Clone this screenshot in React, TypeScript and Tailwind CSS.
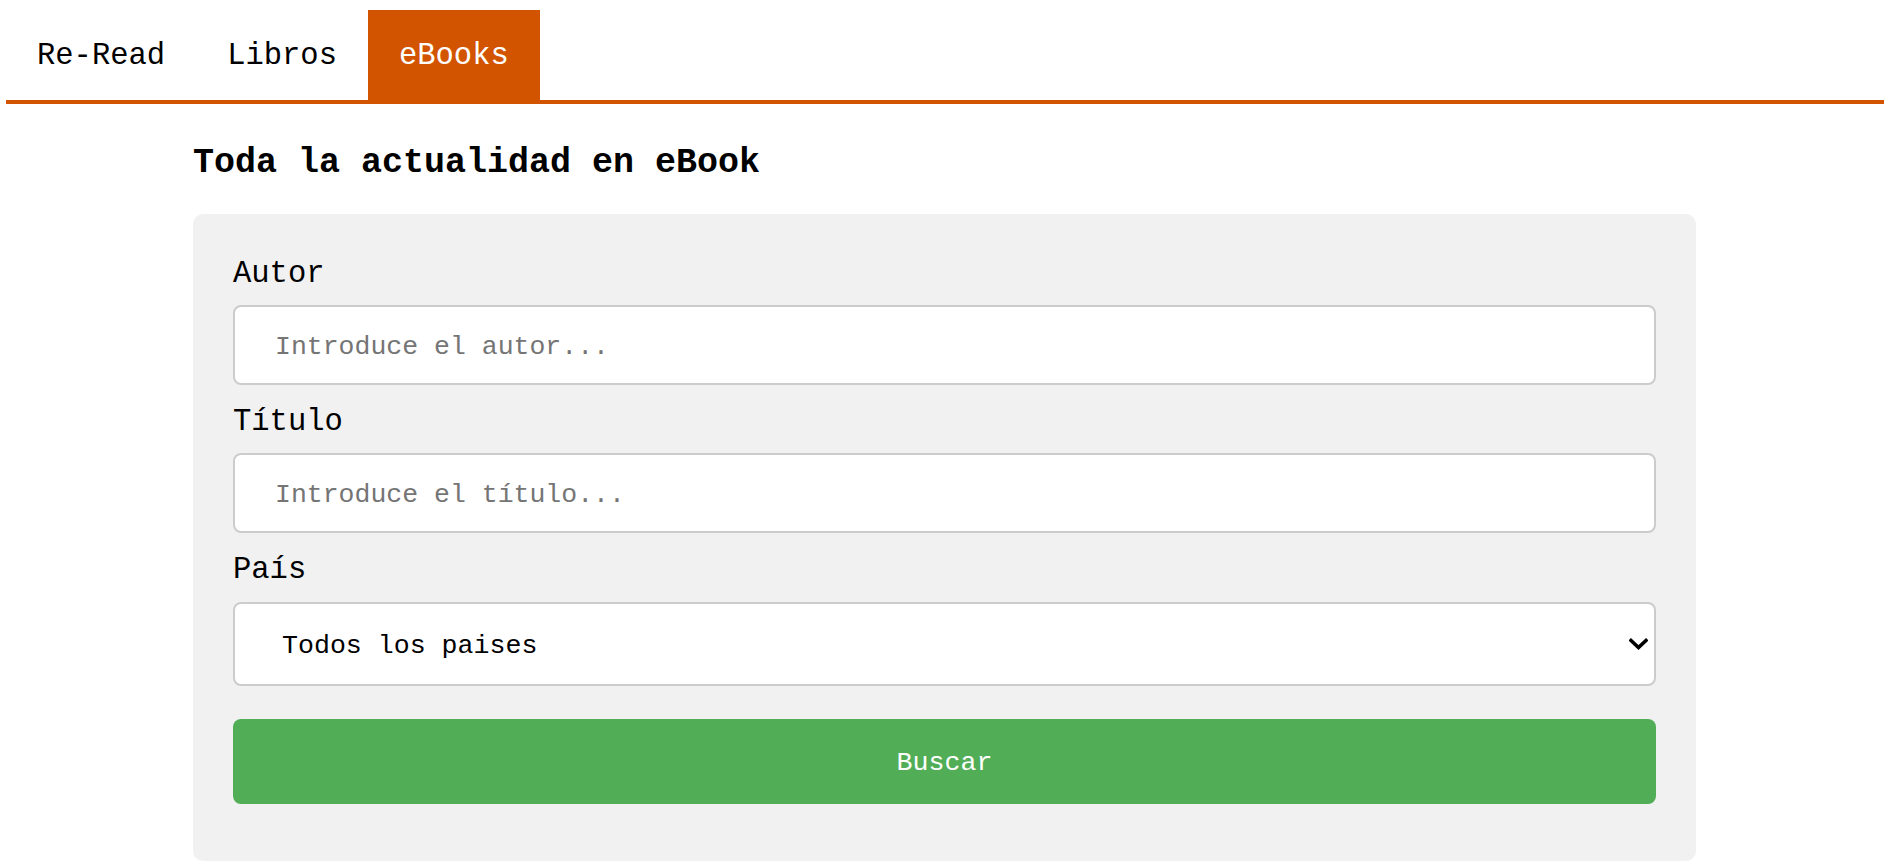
const mono = "font-['Liberation_Mono','Courier_New',monospace]";

const tabs = [
  { label: "Re-Read", active: false },
  { label: "Libros", active: false },
  { label: "eBooks", active: true },
];

function Field({ label, placeholder }: { label: string; placeholder: string }) {
  return (
    <div className="flex flex-col">
      <label className="text-[30.5px] leading-[32px] text-black mb-[15px]">{label}</label>
      <input
        type="text"
        placeholder={placeholder}
        className={`${mono} h-[80px] w-full rounded-[8px] border-2 border-[#cccccc] bg-white pl-[40px] pt-[4px] text-[26.5px] text-black placeholder:text-[#757575] outline-none`}
      />
    </div>
  );
}

export default function App() {
  return (
    <div className={`${mono} min-h-screen bg-white text-black pl-[6px] pr-[8px] pt-[10px]`}>
      <nav className="flex border-b-4 border-[#d35400]">
        {tabs.map((t) => (
          <a
            key={t.label}
            href="#"
            className={`flex h-[90px] items-center px-[31px] pt-[4px] text-[30.5px] ${
              t.active ? "bg-[#d35400] text-white" : "text-black"
            }`}
          >
            {t.label}
          </a>
        ))}
      </nav>

      <main className="ml-[187px] mr-[188px]">
        <h2 className="mt-[39px] text-[35px] leading-[40px] font-bold">Toda la actualidad en eBook</h2>

        <form className="mt-[31px] flex flex-col gap-[21px] rounded-[10px] bg-[#f1f1f1] px-[40px] pt-[44px] pb-[57px]">
          <Field label="Autor" placeholder="Introduce el autor..." />
          <Field label="Título" placeholder="Introduce el título..." />
          <div className="flex flex-col">
            <label className="text-[30.5px] leading-[32px] mb-[16px]">País</label>
            <div className="relative">
              <select
                defaultValue="all"
                className={`${mono} h-[84px] w-full appearance-none rounded-[8px] border-2 border-[#cccccc] bg-white pl-[47px] pt-[5px] text-[26.6px] text-black outline-none`}
              >
                <option value="all">Todos los paises</option>
                <option value="es">España</option>
                <option value="mx">México</option>
                <option value="ar">Argentina</option>
              </select>
              <svg
                className="pointer-events-none absolute right-[8px] top-1/2 -translate-y-1/2"
                width="19"
                height="12"
                viewBox="0 0 19 12"
                fill="none"
              >
                <path d="M2 2.5 L9.5 9.5 L17 2.5" stroke="#000" strokeWidth="3.6" strokeLinecap="square" />
              </svg>
            </div>
          </div>
          <button
            type="button"
            className="mt-[12px] h-[85px] w-full rounded-[8px] bg-[#51ae56] pt-[4px] text-[26.6px] text-white"
          >
            Buscar
          </button>
        </form>
      </main>
    </div>
  );
}
